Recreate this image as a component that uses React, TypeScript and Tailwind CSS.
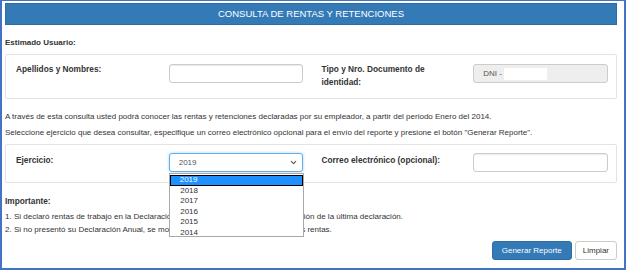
import { ChevronDown } from "lucide-react";

const years = ["2019", "2018", "2017", "2016", "2015", "2014"];

export default function App() {
  return (
    <div className="w-[626px] h-[270px] overflow-hidden bg-white border-l-2 border-t border-r-2 border-b-2 border-[#4472c4] pl-[3px] pr-[7px] pt-[2px] font-['Liberation_Sans',Arial,sans-serif] text-[8px] text-[#333]">
      <div className="h-[22px] bg-[#337ab7] border border-[#2e6da4] flex items-center justify-center text-white text-[9.5px]">
        CONSULTA DE RENTAS Y RETENCIONES
      </div>

      <div className="mt-[13px] font-bold leading-[10px]">Estimado Usuario:</div>

      <div className="mt-[6px] h-[45px] border border-[#e3e3e3] rounded-[2px] pl-[10px] pr-[8px] pt-[9px] flex items-start">
        <div className="w-[153px] font-bold text-[8.3px] leading-[10px]">Apellidos y Nombres:</div>
        <div className="w-[134px] h-[19px] border border-[#ccc] rounded-[3px] bg-white shadow-[inset_0_1px_1px_rgba(0,0,0,0.08)]" />
        <div className="w-[152px] ml-[19px] -mt-[1px] font-bold text-[8.3px] leading-[13px]">
          Tipo y Nro. Documento de
          <br />
          identidad:
        </div>
        <div className="w-[135px] h-[19px] border border-[#ccc] rounded-[3px] bg-[#eee] flex items-center pl-[9px] text-[#555]">
          <span>DNI -</span>
          <span className="ml-[2px] w-[43px] h-[12px] bg-white" />
        </div>
      </div>

      <p className="mt-[13px] leading-[10px]">
        A través de esta consulta usted podrá conocer las rentas y retenciones declaradas por su empleador, a partir del periodo Enero del 2014.
      </p>
      <p className="mt-[6px] leading-[10px]">
        Seleccione ejercicio que desea consultar, especifique un correo electrónico opcional para el envío del reporte y presione el botón "Generar Reporte".
      </p>

      <div className="relative mt-[6px] h-[39px] border border-[#e3e3e3] rounded-[2px] pl-[10px] pr-[8px] pt-[8px] flex items-start">
        <div className="w-[153px] font-bold text-[8.3px] leading-[10px] pt-[2px]">Ejercicio:</div>
        <div className="relative w-[134px] h-[19px] border border-[#66afe9] rounded-[3px] bg-white flex items-center pl-[9px] pr-[4px] text-[#555] shadow-[0_0_3px_rgba(102,175,233,0.6)]">
          <span className="flex-1">2019</span>
          <ChevronDown size={9} strokeWidth={3} className="text-[#555]" />
          <div className="absolute left-[-1px] top-[19px] w-[135px] h-[64px] border border-[#a9a9a9] bg-white z-10 text-[#333] pt-[1px]">
            {years.map((y, i) => (
              <div
                key={y}
                className={
                  i === 0
                    ? "h-[10.5px] leading-[8px] bg-[#1e90ff] text-white border-[1.5px] border-black pl-[9px]"
                    : "h-[10.5px] leading-[10.5px] pl-[10.5px]"
                }
              >
                {y}
              </div>
            ))}
          </div>
        </div>
        <div className="w-[152px] ml-[19px] font-bold text-[8.3px] leading-[10px] pt-[2px]">Correo electrónico (opcional):</div>
        <div className="w-[135px] h-[19px] border border-[#ccc] rounded-[3px] bg-white shadow-[inset_0_1px_1px_rgba(0,0,0,0.08)]" />
      </div>

      <div className="mt-[13px] font-bold text-[8.3px] leading-[10px]">Importante:</div>
      <div className="mt-[4px] leading-[13px]">
        <div>1. Si declaró rentas de trabajo en la Declaración Anual, se mostrará toda la información de la última declaración.</div>
        <div>2. Si no presentó su Declaración Anual, se mostrará la información registrada de sus rentas.</div>
      </div>

      <div className="mt-[5px] flex justify-end gap-[3px]">
        <button className="h-[19px] px-[9px] bg-[#337ab7] border border-[#2e6da4] rounded-[3px] text-white text-[8px]">
          Generar Reporte
        </button>
        <button className="h-[19px] px-[7px] bg-white border border-[#ccc] rounded-[3px] text-[#333] text-[8px]">
          Limpiar
        </button>
      </div>
    </div>
  );
}
